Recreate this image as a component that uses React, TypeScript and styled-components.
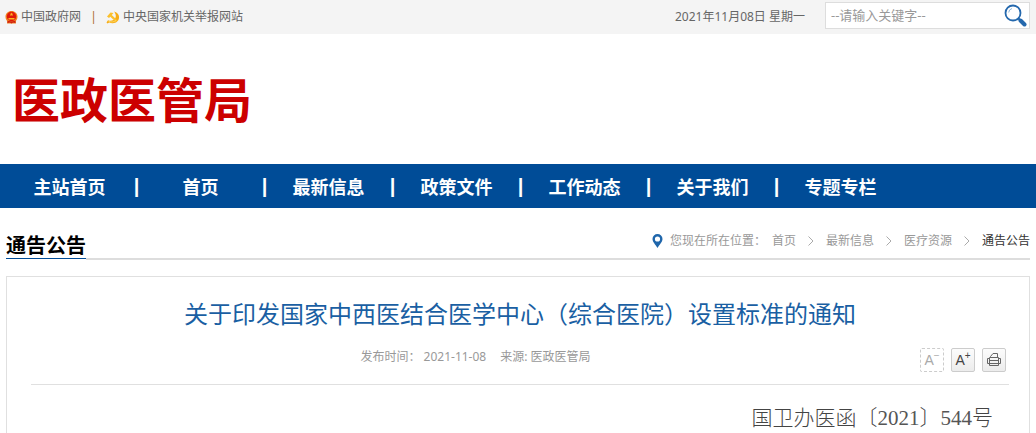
import React from "react";
import styled, { createGlobalStyle } from "styled-components";

const sans = `"Noto Sans", "Noto Sans CJK SC", sans-serif`;

const GlobalStyle = createGlobalStyle`
  * { box-sizing: border-box; }
  body { margin: 0; background: #fff; font: 12px/18px ${sans}; color: #666; }
  a { color: inherit; text-decoration: none; }
  button, input { font-family: inherit; }
`;

const Page = styled.div`
  min-height: 100vh;
  display: flex;
  flex-direction: column;
`;

const TopBar = styled.div`
  display: flex;
  align-items: center;
  height: 34px;
  padding: 0 6px 0 5px;
  background: #f4f4f4;
`;

const TopLink = styled.a`
  display: inline-flex;
  align-items: center;
  gap: 3px;
`;

const TopDivider = styled.span`
  width: 25px;
  text-align: center;
  color: #ad6b2d;
`;

const Today = styled.time`
  margin-left: auto;
  margin-right: 20px;
`;

const Search = styled.form`
  display: flex;
  align-items: center;
  width: 205px;
  height: 27px;
  margin-bottom: 4px;
  border: 1px solid #ddd;
  background: #fff;
`;

const SearchInput = styled.input`
  flex: 1;
  min-width: 0;
  height: 25px;
  padding: 0 5px;
  border: 0;
  outline: 0;
  background: none;
  font-size: 13px;
  color: #333;
  &::placeholder { color: #999; opacity: 1; }
`;

const SearchButton = styled.button`
  display: flex;
  padding: 0 2px 0 0;
  border: 0;
  background: none;
  cursor: pointer;
`;

const Header = styled.header`
  display: flex;
  align-items: center;
  height: 130px;
  padding: 0 12px 4px;
`;

const SiteName = styled.h1`
  margin: 0;
  font: bold 48px/60px "Noto Sans CJK SC", sans-serif;
  color: #c00;
`;

const Nav = styled.nav`
  display: flex;
  align-items: center;
  height: 44px;
  padding: 0 6px;
  background: #004c97;
  color: #fff;
  font: bold 18px/44px "Noto Sans CJK SC", sans-serif;
`;

const NavLink = styled.a`
  width: 121px;
  text-align: center;
  &:first-child { width: 127px; }
`;

const NavDivider = styled.span`
  width: 7px;
  text-align: center;
  font-family: "Liberation Sans", sans-serif;
  font-size: 20px;
`;

const SectionBar = styled.div`
  display: flex;
  align-items: flex-end;
  justify-content: space-between;
  margin: 24px 6px 0;
  border-bottom: 2px solid #ddd;
`;

const SectionTitle = styled.h2`
  margin: 0 0 -1px;
  border-bottom: 1px solid #004c97;
  box-shadow: 0 1px #fff;
  font: bold 20px/26px "Noto Sans CJK SC", sans-serif;
  color: #000;
`;

const Crumbs = styled.nav`
  display: flex;
  align-items: center;
  padding-bottom: 8px;
  color: #999;
`;

const CrumbLabel = styled.span`
  margin: 0 6px 0 7px;
`;

const CrumbArrow = styled.svg`
  margin: 0 12px;
`;

const Current = styled.span`
  color: #333;
`;

const Article = styled.article`
  flex: 1;
  margin: 16px 6px 0;
  padding: 18px 20px 0 24px;
  border: 1px solid #e0e0e0;
  border-bottom: 0;
`;

const Title = styled.h3`
  margin: 0;
  text-align: center;
  font: 24px/36px "Noto Sans CJK SC", sans-serif;
  color: #1a5fa3;
`;

const MetaRow = styled.div`
  display: flex;
  align-items: center;
  margin-top: 17px;
  padding: 0 3px 12px 0;
  border-bottom: 1px solid #e0e0e0;
`;

const Meta = styled.div`
  flex: 1;
  display: flex;
  justify-content: center;
  gap: 14px;
  height: 24px;
  line-height: 18px;
  color: #999;
`;

const Tools = styled.div`
  display: flex;
  gap: 7px;
`;

const ToolButton = styled.button<{ $off?: boolean }>`
  display: flex;
  align-items: center;
  justify-content: center;
  width: 24px;
  height: 24px;
  padding: 0;
  border: 1px ${(p) => (p.$off ? "dashed" : "solid")} #ccc;
  border-radius: 2px;
  background: ${(p) => (p.$off ? "#fff" : "linear-gradient(#fcfcfc, #ececec)")};
  color: ${(p) => (p.$off ? "#aaa" : "#444")};
  font: 14px/24px "Liberation Sans", sans-serif;
  sup { align-self: flex-start; font-size: 10px; line-height: 14px; }
`;

const DocNumber = styled.p`
  margin: 15px 16px 0;
  text-align: right;
  font: 300 21px/32px "Noto Sans CJK SC", serif;
  color: #444;
`;

const Digits = styled.span`
  font-family: "Liberation Serif", serif;
  font-weight: 400;
  color: #555;
`;

const Emblem = () => (
  <svg width="13" height="13" viewBox="0 0 13 13" aria-hidden="true">
    <path d="M6.500 0C10 0 12.500 2.500 12.500 5.800c0 2-.8 3.400-1.800 4.400l.3 2.300H2l.3-2.300C1.300 9.200.5 7.800.5 5.800.5 2.500 3 0 6.500 0z" fill="#f08020" />
    <circle cx="6.500" cy="5.500" r="4.700" fill="#e01808" />
    <path d="M6.500 1.500l.6 1.200 1.300.1-1 .8.3 1.300-1.200-.7-1.200.7.3-1.300-1-.8 1.300-.1zM3.500 7h6v1.500h-6z" fill="#fbb820" />
    <path d="M2.500 9.800l4 .6 4-.6v2.200l-2.500-.5-1.500 1-1.500-1-2.500.5z" fill="#d02010" />
  </svg>
);

const PartyEmblem = () => (
  <svg width="14" height="13" viewBox="0 0 14 13" aria-hidden="true">
    <path d="M8 .5c3.500 1 5.500 3.500 5 6.500-.5 3.400-3.200 5.300-6.300 5.200-1.300 0-2.500-.3-3.500-.8L1.500 12.500.5 11.500l1.500-2.300c2.300.8 4.800.7 6.300-.6C10.500 6.500 10.300 3.300 8 .5z" fill="#f7ac15" />
    <path d="M1 5.500L4.500 1.500l3 .5-1.700 2L11.500 9.500l-1.600 1.500L4.300 5.700 3 7z" fill="#fbc02d" />
    <path d="M2.500 10.300c2.500 1 5.500.9 7.500-.8" fill="none" stroke="#ffdf70" strokeWidth=".8" />
  </svg>
);

const SearchIcon = () => (
  <svg width="23" height="23" viewBox="0 0 23 23" fill="none" aria-hidden="true">
    <circle cx="9" cy="9" r="7.500" stroke="#2468ad" strokeWidth="1.800" />
    <path d="M4.700 8.500a4.500 4.500 0 0 1 3.300-4" stroke="#8db6dc" strokeWidth="1" />
    <path d="M14.300 14.300l2 2" stroke="#2468ad" strokeWidth="2" />
    <path d="M16.500 16.500l4 4" stroke="#2468ad" strokeWidth="4" strokeLinecap="round" />
  </svg>
);

const PinIcon = () => (
  <svg width="11" height="14" viewBox="0 0 11 14" aria-hidden="true">
    <path fillRule="evenodd" d="M5.500 0a5 5 0 0 1 5 5c0 3-3 5.500-5 9-2-3.500-5-6-5-9a5 5 0 0 1 5-5zm0 2.400a2.600 2.600 0 1 0 0 5.200 2.600 2.600 0 0 0 0-5.200z" fill="#1f66ab" />
  </svg>
);

const Arrow = () => (
  <CrumbArrow width="6" height="10" viewBox="0 0 6 10" fill="none" aria-hidden="true">
    <path d="M.5.5L5 5 .5 9.500" stroke="#aaa" />
  </CrumbArrow>
);

const PrintIcon = () => (
  <svg width="14" height="14" viewBox="0 0 14 14" fill="none" stroke="#666" aria-hidden="true">
    <path d="M3.500 5V3.500l2.500-3h4.500V5M2.500 4.500h9v8h-9zM3 7.500h8M3 10.500h8M2.500 5.500h-2v5h2M11.500 5.500h2v5h-2" />
  </svg>
);

const navItems = ["主站首页", "首页", "最新信息", "政策文件", "工作动态", "关于我们", "专题专栏"];
const crumbs = ["首页", "最新信息", "医疗资源"];

export default function App() {
  return (
    <Page>
      <GlobalStyle />
      <TopBar>
        <TopLink href="#"><Emblem />中国政府网</TopLink>
        <TopDivider>|</TopDivider>
        <TopLink href="#"><PartyEmblem />中央国家机关举报网站</TopLink>
        <Today dateTime="2021-11-08">2021年11月08日 星期一</Today>
        <Search>
          <SearchInput aria-label="搜索" placeholder="--请输入关键字--" />
          <SearchButton type="submit" aria-label="搜索"><SearchIcon /></SearchButton>
        </Search>
      </TopBar>
      <Header>
        <SiteName>医政医管局</SiteName>
      </Header>
      <Nav>
        {navItems.map((item, i) => (
          <React.Fragment key={item}>
            {i > 0 && <NavDivider>|</NavDivider>}
            <NavLink href="#">{item}</NavLink>
          </React.Fragment>
        ))}
      </Nav>
      <SectionBar>
        <SectionTitle>通告公告</SectionTitle>
        <Crumbs aria-label="当前位置">
          <PinIcon />
          <CrumbLabel>您现在所在位置：</CrumbLabel>
          {crumbs.map((c) => (
            <React.Fragment key={c}>
              <a href="#">{c}</a>
              <Arrow />
            </React.Fragment>
          ))}
          <Current>通告公告</Current>
        </Crumbs>
      </SectionBar>
      <Article>
        <Title>关于印发国家中西医结合医学中心（综合医院）设置标准的通知</Title>
        <MetaRow>
          <Meta>
            <span>发布时间： 2021-11-08</span>
            <span>来源: 医政医管局</span>
          </Meta>
          <Tools>
            <ToolButton $off type="button" aria-label="缩小字号">A<sup>−</sup></ToolButton>
            <ToolButton type="button" aria-label="放大字号">A<sup>+</sup></ToolButton>
            <ToolButton type="button" aria-label="打印"><PrintIcon /></ToolButton>
          </Tools>
        </MetaRow>
        <DocNumber>国卫办医函〔<Digits>2021</Digits>〕<Digits>544</Digits>号</DocNumber>
      </Article>
    </Page>
  );
}
